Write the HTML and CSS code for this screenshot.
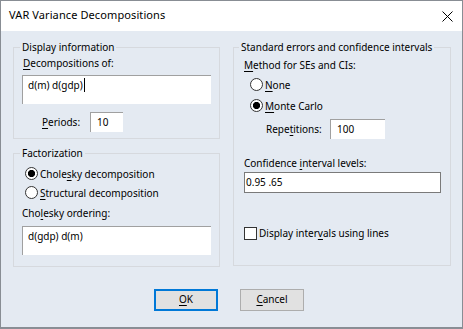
FILE: index.html
```html
<!DOCTYPE html>
<html lang="en">
<head>
  <meta charset="UTF-8">
  <title>VAR Variance Decompositions</title>
  <link rel="stylesheet" href="styles.css">
</head>
<body>

  <div class="window">
    <div class="titlebar">
      <span class="title">VAR Variance Decompositions</span>
      <svg class="close" width="11" height="11" viewBox="0 0 11 11">
        <path d="M0.5 0.5 L10.5 10.5 M10.5 0.5 L0.5 10.5" stroke="#000" stroke-width="1" fill="none"/>
      </svg>
    </div>

    <div class="dialog">
      <div class="columns">
        <div class="col-left">
          <fieldset class="group group-display">
            <legend>Display information</legend>
            <div class="label"><u>D</u>ecompositions of:</div>
            <div class="edit edit-multi">d(m) d(gdp)<span class="caret"></span></div>
            <div class="field-row periods-row">
              <span class="row-label periods-label"><u>P</u>eriods:</span>
              <div class="edit edit-small periods-edit">10</div>
            </div>
          </fieldset>

          <fieldset class="group group-factor">
            <legend>Factorization</legend>
            <div class="radio-list radio-list-left">
              <div class="option"><span class="radio checked"></span>Chole<u>s</u>ky decomposition</div>
              <div class="option"><span class="radio"></span><u>S</u>tructural decomposition</div>
            </div>
            <div class="label ordering-label">Cho<u>l</u>esky ordering:</div>
            <div class="edit edit-multi">d(gdp) d(m)</div>
          </fieldset>
        </div>

        <fieldset class="group group-se">
          <legend>Standard errors and confidence intervals</legend>
          <div class="label method-label"><u>M</u>ethod for SEs and CIs:</div>
          <div class="radio-list radio-list-right">
            <div class="option"><span class="radio"></span><u>N</u>one</div>
            <div class="option"><span class="radio checked"></span><u>M</u>onte Carlo</div>
          </div>
          <div class="field-row reps-row">
            <span class="row-label reps-label">Repe<u>t</u>itions:</span>
            <div class="edit edit-small reps-edit">100</div>
          </div>
          <div class="label conf-label">Confidence <u>i</u>nterval levels:</div>
          <div class="edit edit-full">0.95 .65</div>
          <div class="option check-row"><span class="checkbox"></span>Display inter<u>v</u>als using lines</div>
        </fieldset>
      </div>

      <div class="buttons">
        <button class="btn btn-default"><span><u>O</u>K</span></button>
        <button class="btn"><span><u>C</u>ancel</span></button>
      </div>
    </div>
  </div>

</body>
</html>
```

FILE: styles.css
```css
body {
  margin: 0;
  background-color: #8a8f96;
  font-family: "Noto Sans", "Open Sans", sans-serif;
  font-size: 10px;
  color: #000;
}
u {
  text-decoration-thickness: 1px;
  text-underline-offset: 2px;
}
.window {
  width: 463px;
  height: 328px;
  box-sizing: border-box;
  border: 1px solid #888d94;
  background-color: #e4eaf2;
}
.titlebar {
  height: 30px;
  box-sizing: border-box;
  background-color: #fff;
  display: flex;
  justify-content: space-between;
  align-items: flex-start;
  padding: 6px 9px 0 8px;
  font-size: 11px;
  letter-spacing: 0.1px;
  line-height: 16px;
}
.titlebar .close {
  margin-top: 4px;
}
.dialog {
  padding: 8px 11px 0 12px;
}
.columns {
  display: flex;
  gap: 13px;
  align-items: flex-start;
}
.col-left {
  width: 207px;
  display: flex;
  flex-direction: column;
  gap: 6px;
}

/* group boxes */
.group {
  margin: 0;
  min-width: 0;
  box-sizing: border-box;
  border: 1px solid #d6d9de;
  line-height: 16px;
  white-space: nowrap;
}
.group legend {
  padding: 0 2px;
  margin-left: -2px;
  line-height: 16px;
}
.group-display {
  padding: 0 8px 6px;
}
.group-factor {
  padding: 0 8px 11px;
}
.group-se {
  width: 218px;
  padding: 0 9px 24px 10px;
}
.group-se legend {
  margin-left: -5px;
}

/* edit boxes */
.edit {
  box-sizing: border-box;
  background-color: #fff;
  padding: 1px 0 0 5px;
  line-height: 16px;
}
.edit-multi {
  height: 29px;
  border-top: 1px solid #a0a0a0;
  border-left: 1px solid #a0a0a0;
}
.edit-small {
  height: 20px;
  border-top: 1px solid #a0a0a0;
  border-left: 1px solid #a0a0a0;
  padding-left: 6px;
}
.edit-full {
  height: 21px;
  border: 1px solid #7a7a7a;
  padding-left: 1px;
}
.caret {
  display: inline-block;
  width: 1px;
  height: 14px;
  background-color: #000;
  vertical-align: -3px;
  margin-left: 1px;
}

.group-display .label {
  margin-left: 1px;
}
.group-display .edit-multi {
  margin-top: 4px;
}
.field-row {
  display: flex;
  align-items: center;
}
.periods-row {
  margin-top: 8px;
}
.periods-label {
  margin-left: 20px;
  width: 48px;
}
.periods-edit {
  width: 33px;
}

/* radios and checkbox */
.option {
  display: flex;
  align-items: center;
  white-space: nowrap;
}
.radio {
  width: 13px;
  height: 13px;
  box-sizing: border-box;
  border: 1px solid #333;
  border-radius: 50%;
  background-color: #fff;
  margin-right: 2px;
}
.radio.checked {
  background: radial-gradient(circle, #000 3.3px, #fff 3.9px);
}
.radio-list-left {
  margin-top: 3px;
}
.radio-list-left .option {
  height: 19px;
}
.radio-list-left .radio {
  margin-left: 3px;
}
.ordering-label {
  margin-top: 3px;
}
.group-factor .edit-multi {
  margin-top: 5px;
}

.method-label {
  margin-top: 2px;
}
.radio-list-right {
  margin-top: 2px;
  display: flex;
  flex-direction: column;
  gap: 2px;
}
.radio-list-right .option {
  height: 19px;
}
.radio-list-right .radio {
  margin-left: 6px;
}
.reps-row {
  margin-top: 4px;
}
.reps-label {
  margin-left: 22px;
  width: 64px;
}
.reps-edit {
  width: 55px;
}
.conf-label {
  margin-top: 16px;
}
.edit-full {
  margin-top: 1px;
}
.check-row {
  margin-top: 32px;
  height: 16px;
}
.checkbox {
  width: 13px;
  height: 13px;
  box-sizing: border-box;
  border: 1px solid #333;
  background-color: #fff;
  margin-right: 2px;
}

/* buttons */
.buttons {
  display: flex;
  gap: 22px;
  margin-top: 22px;
  padding-left: 141px;
}
.btn {
  width: 64px;
  height: 22px;
  box-sizing: border-box;
  background-color: #e1e1e1;
  border: 1px solid #adadad;
  border-radius: 0;
  font-family: inherit;
  font-size: inherit;
  line-height: 16px;
  padding: 0 0 2px;
  color: #000;
}
.btn-default {
  border: 2px solid #0078d7;
}
```
